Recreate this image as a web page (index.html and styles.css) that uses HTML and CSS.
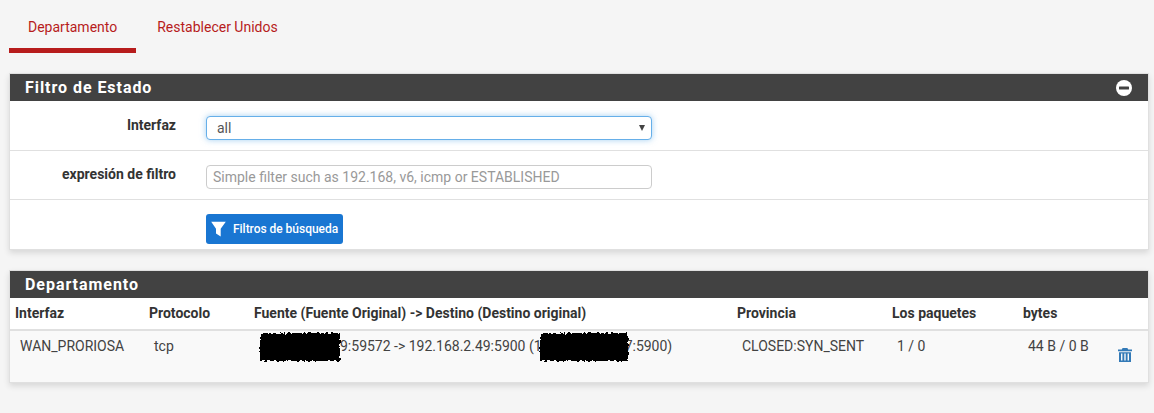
FILE: index.html
```html
<!DOCTYPE html>
<html lang="es">
<head>
  <meta charset="UTF-8">
  <title>Departamento</title>
  <link rel="stylesheet" href="styles.css">
</head>
<body>
  <svg class="defs" width="0" height="0">
    <filter id="rough" x="-10%" y="-20%" width="120%" height="140%">
      <feTurbulence type="fractalNoise" baseFrequency="0.35" numOctaves="2" seed="4"/>
      <feDisplacementMap in="SourceGraphic" scale="5"/>
      <feGaussianBlur stdDeviation="0.5"/>
    </filter>
  </svg>

  <ul class="tabs">
    <li class="tab active"><a href="#">Departamento</a></li>
    <li class="tab"><a href="#">Restablecer Unidos</a></li>
  </ul>

  <section class="panel filtro">
    <div class="panel-heading">
      <h2>Filtro de Estado</h2>
      <svg class="toggle" width="16" height="16" viewBox="0 0 16 16">
        <circle cx="8" cy="8" r="8" fill="#fff"/>
        <rect x="3" y="6.5" width="10" height="3" rx="0.5" fill="#424242"/>
      </svg>
    </div>
    <div class="form-row row-interfaz">
      <label>Interfaz</label>
      <div class="select">
        <span>all</span>
        <i class="caret"></i>
      </div>
    </div>
    <div class="form-row row-expr">
      <label for="expr">expresión de filtro</label>
      <input id="expr" type="text" placeholder="Simple filter such as 192.168, v6, icmp or ESTABLISHED">
    </div>
    <div class="form-row row-btn">
      <span class="spacer"></span>
      <button>
        <svg width="15" height="16" viewBox="0 0 15 16">
          <path d="M0.2 0.8h14.6L9.7 7.8v7.7L5 12.6V7.8z" fill="#fff"/>
        </svg>
        Filtros de búsqueda
      </button>
    </div>
  </section>

  <section class="panel estados">
    <div class="panel-heading">
      <h2>Departamento</h2>
    </div>
    <table>
      <thead>
        <tr>
          <th class="c-if">Interfaz</th>
          <th class="c-pr">Protocolo</th>
          <th class="c-src">Fuente (Fuente Original) -&gt; Destino (Destino original)</th>
          <th class="c-st">Provincia</th>
          <th class="c-pk">Los paquetes</th>
          <th class="c-by">bytes</th>
          <th></th>
        </tr>
      </thead>
      <tbody>
        <tr>
          <td>WAN_PRORIOSA</td>
          <td>tcp</td>
          <td><span class="tachado t1"></span>9:59572 -&gt; 192.168.2.49:5900 (1<span class="tachado t2"></span>7:5900)</td>
          <td>CLOSED:SYN_SENT</td>
          <td>1 / 0</td>
          <td>44 B / 0 B</td>
          <td class="c-del">
            <svg width="16" height="16" viewBox="0 0 16 16">
              <path d="M5.6 1h4.8l.8 1.6H15v1.6H1V2.6h3.8zM2 5.2h12V15H2zM4 6.6v7h1.4v-7zM7.3 6.6v7h1.4v-7zM10.6 6.6v7H12v-7z" fill="#337ab7" fill-rule="evenodd"/>
            </svg>
          </td>
        </tr>
      </tbody>
    </table>
  </section>
</body>
</html>
```

FILE: styles.css
```css
body {
  margin: 0;
  background: #f5f5f5;
  font-family: Roboto, sans-serif;
  font-size: 14px;
  color: #424242;
}
.defs {
  display: block;
  height: 0;
}
.tabs {
  list-style: none;
  display: flex;
  gap: 2px;
  margin: 0 0 20px 9px;
  padding: 0;
}
.tab {
  height: 53px;
}
.tab a {
  display: block;
  height: 48px;
  line-height: 55px;
  padding: 0 19px;
  color: #b71c1c;
  text-decoration: none;
}
.tab.active a {
  border-bottom: 5px solid #b71c1c;
}
.panel {
  margin: 0 5px 20px 9px;
  background: #fff;
  border: 1px solid #e0e0e0;
  border-top: 0;
  box-shadow: 0 3px 6px rgba(0, 0, 0, 0.12);
}
.panel-heading {
  display: flex;
  justify-content: space-between;
  align-items: center;
  height: 27px;
  padding: 0 16px 0 15px;
  background: #424242;
  border-top: 1px solid #e0e0e0;
  color: #fff;
}
.panel-heading h2 {
  margin: 0;
  font-size: 16px;
  font-weight: 700;
  letter-spacing: 0.95px;
  line-height: 27px;
}
.form-row {
  display: flex;
  border-bottom: 1px solid #e0e0e0;
}
.form-row:last-child {
  border-bottom: 0;
}
.form-row label {
  width: 166px;
  text-align: right;
  font-size: 14px;
  font-weight: 700;
  color: #333;
}
.row-interfaz {
  height: 49px;
}
.row-interfaz label {
  padding-top: 16px;
}
.row-expr {
  height: 48px;
}
.row-expr label {
  padding-top: 15px;
}
.select, .row-expr input {
  box-sizing: border-box;
  width: 446px;
  height: 24px;
  margin-left: 30px;
  border-radius: 4px;
  background: #fff;
}
.select {
  display: flex;
  justify-content: space-between;
  align-items: center;
  margin-top: 15px;
  padding: 0 6px 0 10px;
  border: 1px solid #66afe9;
  box-shadow: 0 0 6px rgba(102, 175, 233, 0.6);
  color: #555;
}
.caret {
  border-left: 3.5px solid transparent;
  border-right: 3.5px solid transparent;
  border-top: 6px solid #444;
}
.row-expr input {
  margin-top: 14px;
  padding: 0 6px;
  border: 1px solid #ccc;
  font-family: Roboto, sans-serif;
  font-size: 14px;
  outline: none;
}
.row-expr input::placeholder {
  color: #999;
}
.row-btn {
  height: 49px;
}
.spacer {
  width: 196px;
}
.row-btn button {
  display: flex;
  align-items: center;
  gap: 7px;
  height: 30px;
  margin-top: 14px;
  padding: 0 5px;
  background: #1976d2;
  border: 0;
  border-radius: 3px;
  color: #fff;
  font-family: Roboto, sans-serif;
  font-size: 12px;
  font-weight: 500;
  letter-spacing: -0.03px;
}
table {
  width: 100%;
  border-collapse: collapse;
  table-layout: fixed;
}
th {
  height: 32px;
  padding: 0 5px 2px;
  box-sizing: border-box;
  text-align: left;
  font-size: 14px;
  font-weight: 700;
  color: #333;
  border-bottom: 2px solid #e0e0e0;
  white-space: nowrap;
}
td {
  height: 52px;
  padding: 7px 5px 0 10px;
  vertical-align: top;
  background: #f9f9f9;
  white-space: nowrap;
  box-sizing: border-box;
}
.c-if { width: 134px; }
.c-pr { width: 105px; }
.c-src { width: 483px; }
.c-st { width: 155px; }
.c-pk { width: 131px; }
.c-by { width: 90px; }
td.c-del {
  padding: 16px 0 0 9px;
}
.tachado {
  display: inline-block;
  height: 28px;
  margin: -8px 0;
  background: #000;
  vertical-align: middle;
  filter: url(#rough);
}
.t1 {
  width: 80px;
  margin-left: 1px;
}
.t2 {
  width: 88px;
  margin-left: -2px;
  margin-right: -3px;
}
```
